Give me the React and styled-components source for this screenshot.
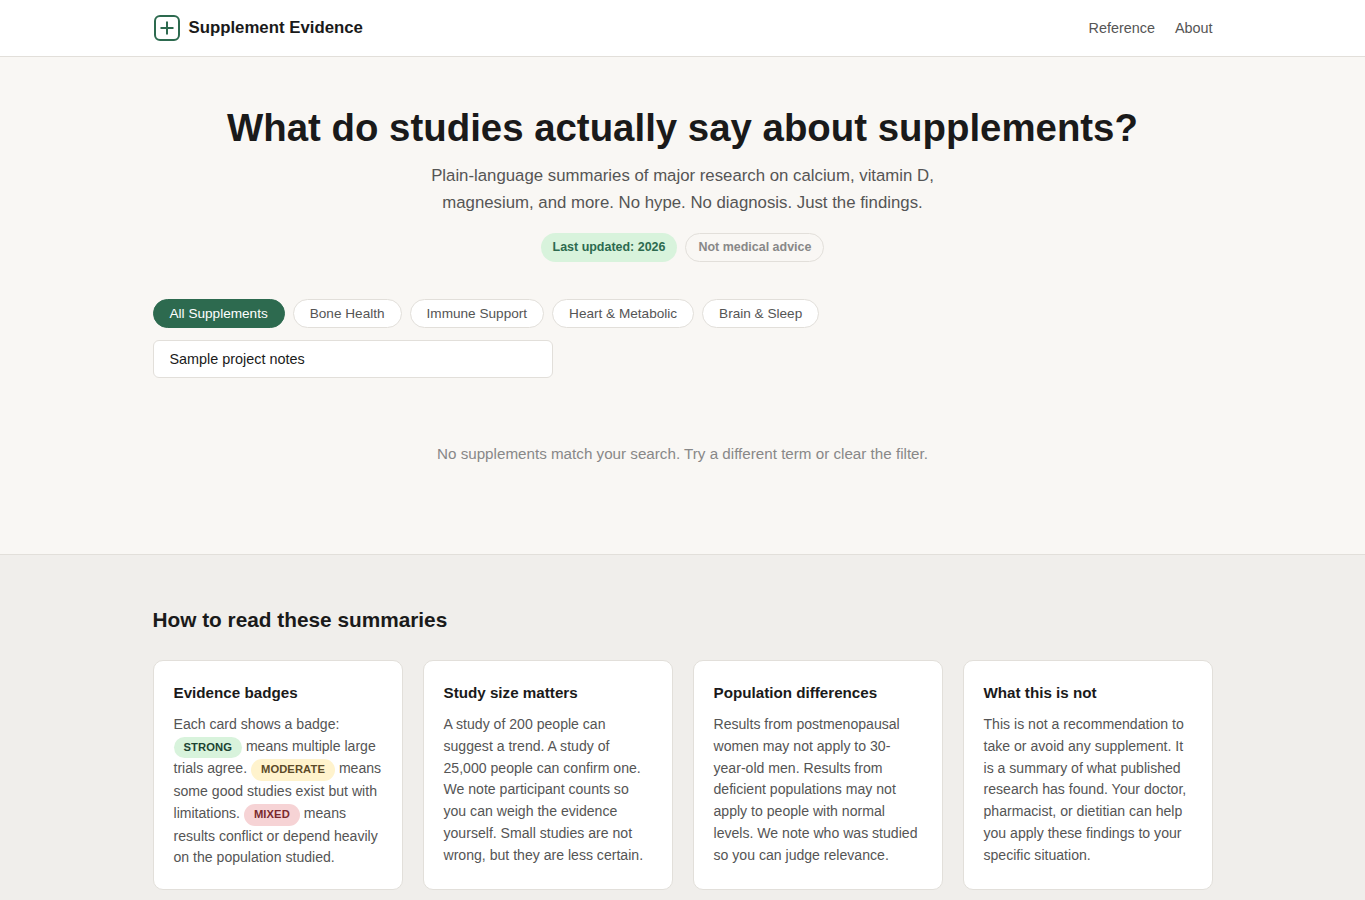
import React, { useState } from 'react';
import styled, { createGlobalStyle } from 'styled-components';

const GlobalStyle = createGlobalStyle`
  * {
    box-sizing: border-box;
  }
  body {
    margin: 0;
    background: #f9f7f4;
    color: #1a1a1a;
    font-family: "Liberation Sans", Arial, sans-serif;
  }
`;

const Container = styled.div`
  max-width: 1100px;
  margin: 0 auto;
  padding: 0 20px;
`;

const Header = styled.header`
  background: #fff;
  border-bottom: 1px solid #e2dfda;
`;

const HeaderRow = styled(Container)`
  display: flex;
  align-items: center;
  justify-content: space-between;
  height: 56px;
`;

const Logo = styled.a`
  display: flex;
  align-items: center;
  gap: 8px;
  font-size: 16.8px;
  font-weight: 700;
  color: #1a1a1a;
`;

const Nav = styled.nav`
  display: flex;
  gap: 20px;
  a {
    font-size: 14.4px;
    color: #555;
  }
`;

const Hero = styled.section`
  padding: 49px 20px 37px;
  text-align: center;
  h1 {
    margin: 0 0 13px;
    font-size: 38.4px;
    line-height: 1.15;
    font-weight: 700;
    color: #1a1a1a;
  }
  p {
    margin: 0 auto;
    max-width: 560px;
    font-size: 16.8px;
    line-height: 1.6;
    color: #555;
  }
`;

const HeroBadges = styled.div`
  display: flex;
  justify-content: center;
  gap: 8px;
  margin-top: 16px;
`;

const HeroBadge = styled.span`
  padding: ${({ $muted }) => ($muted ? '7px 12px' : '8px 12px')};
  border-radius: 20px;
  font-size: 12.48px;
  line-height: 13.4px;
  font-weight: 700;
  border: ${({ $muted }) => ($muted ? '1px solid #e2dfda' : 'none')};
  background: ${({ $muted }) => ($muted ? '#f9f7f4' : '#d8f3dc')};
  color: ${({ $muted }) => ($muted ? '#888' : '#2d6a4f')};
`;

const Filters = styled.div`
  display: flex;
  gap: 8px;
  margin-bottom: 12px;
`;

const Pill = styled.button`
  height: 29px;
  padding: 0 16px;
  border-radius: 20px;
  border: 1px solid ${({ $active }) => ($active ? '#2d6a4f' : '#e2dfda')};
  background: ${({ $active }) => ($active ? '#2d6a4f' : '#fff')};
  color: ${({ $active }) => ($active ? '#fff' : '#555')};
  font-family: inherit;
  font-size: 13.6px;
  cursor: pointer;
`;

const Search = styled.input`
  display: block;
  width: 400px;
  height: 38px;
  padding: 0 16px;
  border: 1px solid #e2dfda;
  border-radius: 6px;
  background: #fff;
  color: #1a1a1a;
  font-family: inherit;
  font-size: 14.4px;
  outline: none;
`;

const Empty = styled.p`
  margin: 0;
  padding: 67px 0 91px;
  text-align: center;
  font-size: 15.2px;
  line-height: 18px;
  color: #888;
`;

const Guide = styled.section`
  padding: 52px 0 48px;
  background: #f0eeeb;
  border-top: 1px solid #e2dfda;
  h2 {
    margin: 0 0 27px;
    font-size: 20.8px;
    line-height: 26px;
    font-weight: 700;
    color: #1a1a1a;
  }
`;

const CardGrid = styled.div`
  display: grid;
  grid-template-columns: repeat(4, 1fr);
  gap: 20px;
`;

const Card = styled.article`
  padding: 20px;
  background: #fff;
  border: 1px solid #e2dfda;
  border-radius: 10px;
  h3 {
    margin: 0 0 8.6px;
    font-size: 15.2px;
    line-height: 24px;
    font-weight: 700;
    color: #1a1a1a;
  }
  p {
    margin: 0;
    font-size: 14.08px;
    line-height: 1.55;
    color: #555;
  }
`;

const levels = {
  strong: { bg: '#d8f3dc', fg: '#1b4332' },
  moderate: { bg: '#fff3cd', fg: '#5c4a28' },
  mixed: { bg: '#f6d3d5', fg: '#7a2a2e' },
};

const Level = styled.span`
  display: inline-block;
  padding: 2px 10px;
  border-radius: 20px;
  font-size: 11.2px;
  line-height: 17.7px;
  font-weight: 700;
  letter-spacing: 0.1px;
  vertical-align: baseline;
  background: ${({ $level }) => levels[$level].bg};
  color: ${({ $level }) => levels[$level].fg};
`;

const categories = ['All Supplements', 'Bone Health', 'Immune Support', 'Heart & Metabolic', 'Brain & Sleep'];

const cards = [
  {
    title: 'Study size matters',
    text: 'A study of 200 people can suggest a trend. A study of 25,000 people can confirm one. We note participant counts so you can weigh the evidence yourself. Small studies are not wrong, but they are less certain.',
  },
  {
    title: 'Population differences',
    text: 'Results from postmenopausal women may not apply to 30-year-old men. Results from deficient populations may not apply to people with normal levels. We note who was studied so you can judge relevance.',
  },
  {
    title: 'What this is not',
    text: 'This is not a recommendation to take or avoid any supplement. It is a summary of what published research has found. Your doctor, pharmacist, or dietitian can help you apply these findings to your specific situation.',
  },
];

const LogoIcon = () => (
  <svg width="28" height="28" viewBox="0 0 28 28" fill="none" stroke="#2d6a4f">
    <rect x="2" y="2" width="24" height="24" rx="5" strokeWidth="2" />
    <path d="M14 7.5v13M7.5 14h13" strokeWidth="2" />
  </svg>
);

const App = () => {
  const [active, setActive] = useState(categories[0]);

  return (
    <>
      <GlobalStyle />
      <Header>
        <HeaderRow>
          <Logo>
            <LogoIcon />
            Supplement Evidence
          </Logo>
          <Nav>
            <a>Reference</a>
            <a>About</a>
          </Nav>
        </HeaderRow>
      </Header>
      <Hero>
        <h1>What do studies actually say about supplements?</h1>
        <p>
          Plain-language summaries of major research on calcium, vitamin D, magnesium, and more. No
          hype. No diagnosis. Just the findings.
        </p>
        <HeroBadges>
          <HeroBadge>Last updated: 2026</HeroBadge>
          <HeroBadge $muted>Not medical advice</HeroBadge>
        </HeroBadges>
      </Hero>
      <Container>
        <Filters>
          {categories.map((c) => (
            <Pill key={c} $active={c === active} onClick={() => setActive(c)}>
              {c}
            </Pill>
          ))}
        </Filters>
        <Search defaultValue="Sample project notes" />
        <Empty>No supplements match your search. Try a different term or clear the filter.</Empty>
      </Container>
      <Guide>
        <Container>
          <h2>How to read these summaries</h2>
          <CardGrid>
            <Card>
              <h3>Evidence badges</h3>
              <p>
                Each card shows a badge: <Level $level="strong">STRONG</Level> means multiple large
                trials agree. <Level $level="moderate">MODERATE</Level> means some good studies
                exist but with limitations. <Level $level="mixed">MIXED</Level> means results
                conflict or depend heavily on the population studied.
              </p>
            </Card>
            {cards.map((card) => (
              <Card key={card.title}>
                <h3>{card.title}</h3>
                <p>{card.text}</p>
              </Card>
            ))}
          </CardGrid>
        </Container>
      </Guide>
    </>
  );
};

export default App;
